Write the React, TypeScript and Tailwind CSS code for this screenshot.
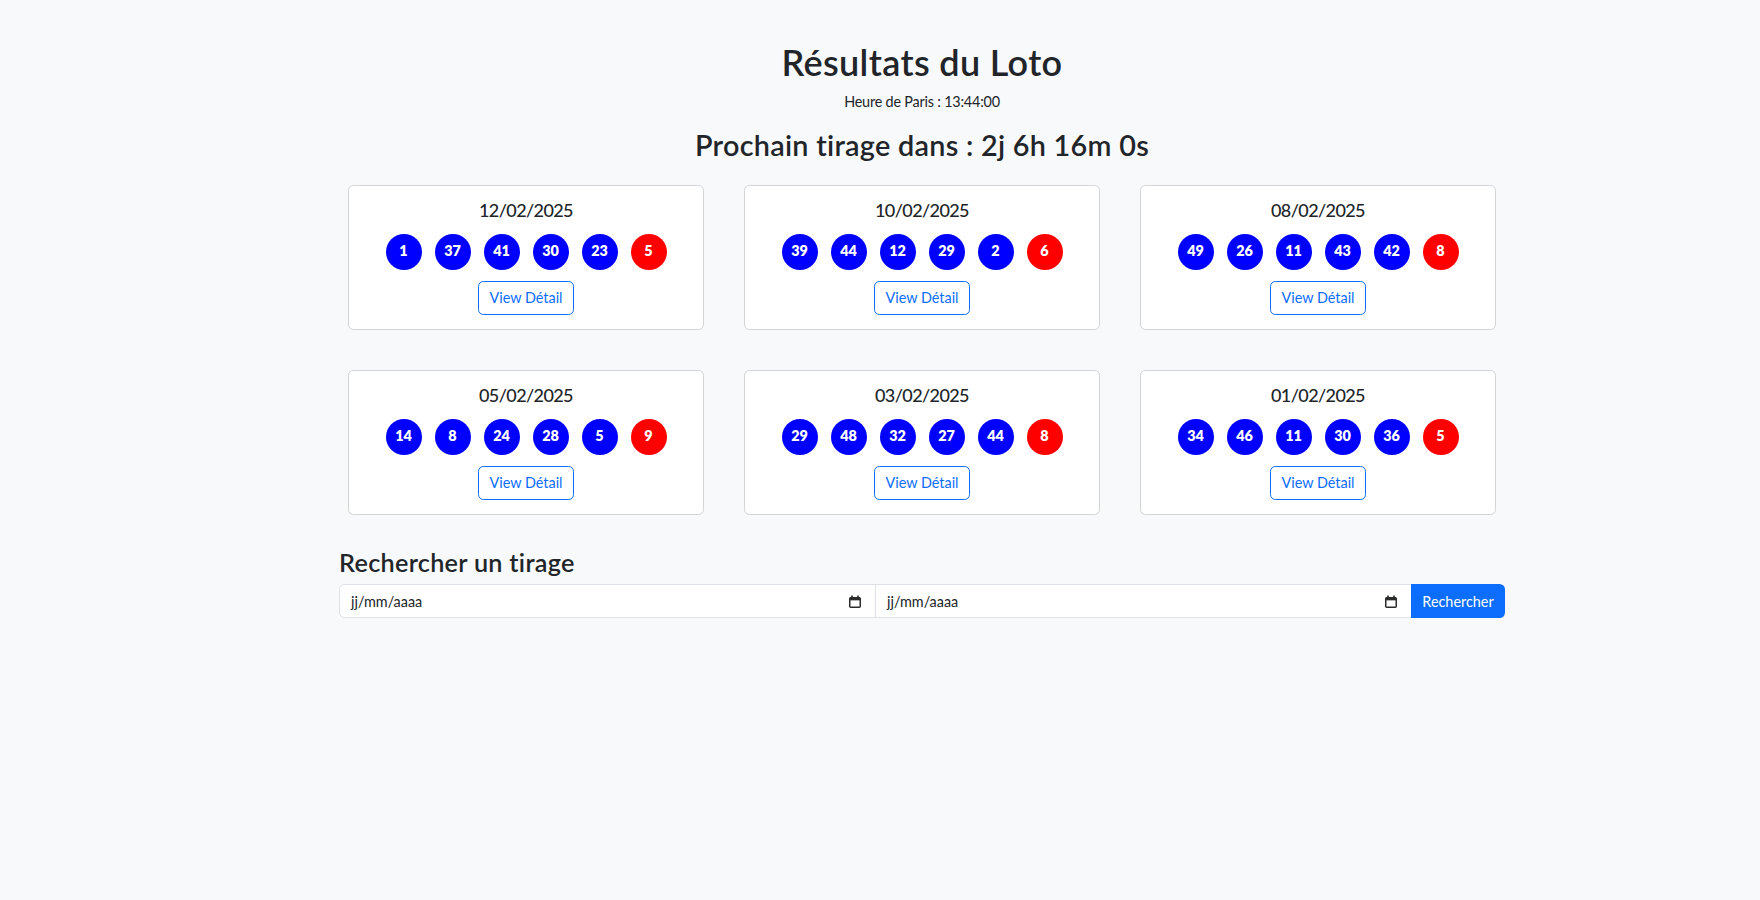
import React from 'react';

type Draw = { date: string; numbers: number[]; chance: number };

const draws: Draw[] = [
  { date: '12/02/2025', numbers: [1, 37, 41, 30, 23], chance: 5 },
  { date: '10/02/2025', numbers: [39, 44, 12, 29, 2], chance: 6 },
  { date: '08/02/2025', numbers: [49, 26, 11, 43, 42], chance: 8 },
  { date: '05/02/2025', numbers: [14, 8, 24, 28, 5], chance: 9 },
  { date: '03/02/2025', numbers: [29, 48, 32, 27, 44], chance: 8 },
  { date: '01/02/2025', numbers: [34, 46, 11, 30, 36], chance: 5 },
];

const font = { fontFamily: 'Lato, "Noto Sans", sans-serif' };

const CalendarIcon: React.FC = () => (
  <svg width="12" height="13" viewBox="0 0 12 13" className="shrink-0">
    <rect x="2.2" y="0.5" width="1.6" height="2.5" fill="#2b2b2b" />
    <rect x="8.2" y="0.5" width="1.6" height="2.5" fill="#2b2b2b" />
    <rect x="0.75" y="2.75" width="10.5" height="9.5" rx="1" fill="none" stroke="#2b2b2b" strokeWidth="1.5" />
    <rect x="0.75" y="2.75" width="10.5" height="2.6" fill="#2b2b2b" />
  </svg>
);

const Ball: React.FC<{ value: number; red?: boolean }> = ({ value, red }) => (
  <div
    className={`w-[36px] h-[36px] rounded-full flex items-center justify-center text-white font-extrabold text-[14.4px] leading-none ${
      red ? 'bg-[#ff0000]' : 'bg-[#0000ff]'
    }`}
  >
    {value}
  </div>
);

const DrawCard: React.FC<{ draw: Draw }> = ({ draw }) => (
  <div className="w-[356px] h-[145px] bg-white border border-[#d3d4d5] rounded-[5.4px] flex flex-col items-center pt-[14px]">
    <h5 className="text-[18px] leading-[21.6px] font-medium tracking-[-0.6px] text-[#212529]">{draw.date}</h5>
    <div className="flex gap-[13px] mt-[12.5px]">
      {draw.numbers.map((n, i) => (
        <Ball key={i} value={n} />
      ))}
      <Ball value={draw.chance} red />
    </div>
    <button className="mt-[11px] h-[34px] px-[10.8px] border border-[#0d6efd] text-[#0d6efd] rounded-[5.4px] text-[14.4px] leading-[21.6px] bg-white">
      View Détail
    </button>
  </div>
);

const DateField: React.FC<{ first?: boolean }> = ({ first }) => (
  <div
    className={`flex-1 h-[34px] bg-white border border-[#dee2e6] flex items-center justify-between pl-[11px] pr-[14px] text-[14.4px] text-[#212529] ${
      first ? 'rounded-l-[5.4px]' : '-ml-px'
    }`}
  >
    <span>jj/mm/aaaa</span>
    <CalendarIcon />
  </div>
);

export default function App() {
  return (
    <div className="min-h-screen bg-[#f8f9fa] text-[#212529] pl-[84px]" style={font}>
      <div className="w-[1166px] mx-auto pt-[41px] flex flex-col">
        <h1 className="text-center text-[36px] leading-[43px] font-semibold tracking-[0.35px]">Résultats du Loto</h1>
        <p className="text-center text-[14.4px] leading-[21.6px] tracking-[-0.2px] mt-[7px]">Heure de Paris : 13:44:00</p>
        <h2 className="text-center text-[28.8px] leading-[34.6px] font-semibold tracking-[0.27px] mt-[15.6px]">
          Prochain tirage dans : 2j 6h 16m 0s
        </h2>

        <div className="grid grid-cols-[repeat(3,356px)] gap-[40px] justify-center mt-[21.8px]">
          {draws.map((d) => (
            <DrawCard key={d.date} draw={d} />
          ))}
        </div>

        <h3 className="text-[25.2px] leading-[30.2px] font-semibold tracking-[0.3px] mt-[32px]">Rechercher un tirage</h3>
        <div className="flex mt-[7.7px]">
          <DateField first />
          <DateField />
          <button className="w-[94px] h-[34px] bg-[#0d6efd] text-white text-[14.4px] rounded-r-[5.4px] -ml-px">
            Rechercher
          </button>
        </div>
      </div>
    </div>
  );
}
